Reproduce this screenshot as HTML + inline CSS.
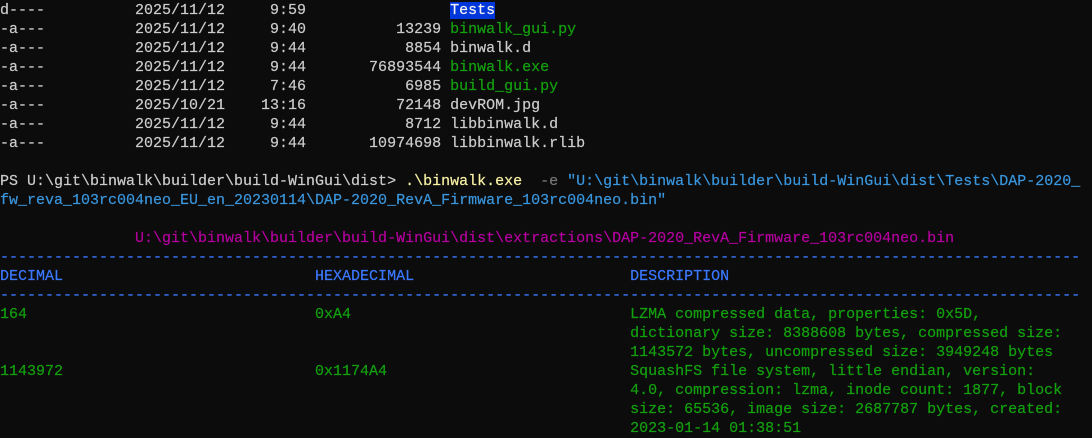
<!DOCTYPE html>
<html><head><meta charset="utf-8"><style>
html,body{margin:0;padding:0;background:#0c0c0c;width:1092px;height:430px;overflow:hidden}
pre{margin:0;position:absolute;left:0;top:1px;font-family:"Liberation Mono",monospace;font-size:15px;line-height:19px;color:#cccccc;white-space:pre;-webkit-text-stroke:0.2px currentColor}
.g{color:#13a10e}.b{color:#3a96dd}.y{color:#f9f1a5}.d{color:#767676}.m{color:#b4009e}.h{color:#3b78ff}
.t{background:#0037da;color:#f2f2f2}
</style></head><body><pre>d----          2025/11/12     9:59                <span class="t">Tests</span>
-a---          2025/11/12     9:40          13239 <span class="g">binwalk_gui.py</span>
-a---          2025/11/12     9:44           8854 binwalk.d
-a---          2025/11/12     9:44       76893544 <span class="g">binwalk.exe</span>
-a---          2025/11/12     7:46           6985 <span class="g">build_gui.py</span>
-a---          2025/10/21    13:16          72148 devROM.jpg
-a---          2025/11/12     9:44           8712 libbinwalk.d
-a---          2025/11/12     9:44       10974698 libbinwalk.rlib

PS U:\git\binwalk\builder\build-WinGui\dist> <span class="y">.\binwalk.exe</span>  <span class="d">-e</span> <span class="b">"U:\git\binwalk\builder\build-WinGui\dist\Tests\DAP-2020_
fw_reva_103rc004neo_EU_en_20230114\DAP-2020_RevA_Firmware_103rc004neo.bin"</span>

<span class="m">               U:\git\binwalk\builder\build-WinGui\dist\extractions\DAP-2020_RevA_Firmware_103rc004neo.bin</span>
<span class="h">------------------------------------------------------------------------------------------------------------------------
DECIMAL                            HEXADECIMAL                        DESCRIPTION
------------------------------------------------------------------------------------------------------------------------</span>
<span class="g">164                                0xA4                               LZMA compressed data, properties: 0x5D,
                                                                      dictionary size: 8388608 bytes, compressed size:
                                                                      1143572 bytes, uncompressed size: 3949248 bytes
1143972                            0x1174A4                           SquashFS file system, little endian, version:
                                                                      4.0, compression: lzma, inode count: 1877, block
                                                                      size: 65536, image size: 2687787 bytes, created:
                                                                      2023-01-14 01:38:51</span></pre></body></html>
